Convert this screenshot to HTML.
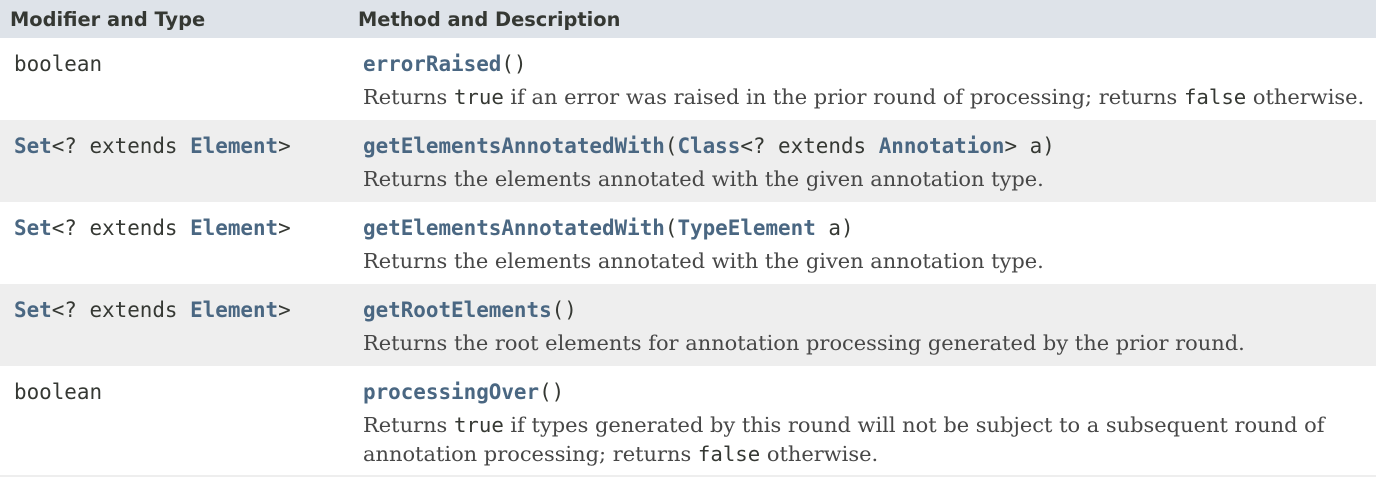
<!DOCTYPE html>
<html><head><meta charset="utf-8"><style>
body{margin:0;width:1376px;height:479px;background:#fff;position:relative;overflow:hidden}
.row{position:absolute;left:0;width:1376px}
.hd{top:0;height:38px;background:#dee3e9}
.h{position:absolute;top:8px;font:bold 19.4px "DejaVu Sans",sans-serif;color:#353833}
.c{position:absolute;font:20.9px "DejaVu Sans Mono",monospace;color:#353833;white-space:pre;line-height:24px}
.c b{color:#4a6782;font-weight:bold}
.d{position:absolute;left:363px;font:20.95px "DejaVu Serif",serif;color:#474747;line-height:29px;white-space:nowrap}
.d code{font:20.7px "DejaVu Sans Mono",monospace;color:#353833}
.g{background:#eeeeee}
</style></head><body>
<div class="row hd"><span class="h" style="left:10px">Modifier and Type</span><span class="h" style="left:358px">Method and Description</span></div>
<div class="row" style="top:38px;height:82px"></div>
<div class="row g" style="top:120px;height:82px"></div>
<div class="row" style="top:202px;height:82px"></div>
<div class="row g" style="top:284px;height:82px"></div>
<div class="row" style="top:475px;height:2px;background:#eeeeee"></div>

<div class="c" style="left:14px;top:52px">boolean</div>
<div class="c" style="left:363px;top:52px"><b>errorRaised</b>()</div>
<div class="d" style="top:83px">Returns <code>true</code> if an error was raised in the prior round of processing; returns <code>false</code> otherwise.</div>

<div class="c" style="left:14px;top:134px"><b>Set</b>&lt;? extends <b>Element</b>&gt;</div>
<div class="c" style="left:363px;top:134px"><b>getElementsAnnotatedWith</b>(<b>Class</b>&lt;? extends <b>Annotation</b>&gt; a)</div>
<div class="d" style="top:165px">Returns the elements annotated with the given annotation type.</div>

<div class="c" style="left:14px;top:216px"><b>Set</b>&lt;? extends <b>Element</b>&gt;</div>
<div class="c" style="left:363px;top:216px"><b>getElementsAnnotatedWith</b>(<b>TypeElement</b> a)</div>
<div class="d" style="top:247px">Returns the elements annotated with the given annotation type.</div>

<div class="c" style="left:14px;top:298px"><b>Set</b>&lt;? extends <b>Element</b>&gt;</div>
<div class="c" style="left:363px;top:298px"><b>getRootElements</b>()</div>
<div class="d" style="top:329px">Returns the root elements for annotation processing generated by the prior round.</div>

<div class="c" style="left:14px;top:380px">boolean</div>
<div class="c" style="left:363px;top:380px"><b>processingOver</b>()</div>
<div class="d" style="top:411px">Returns <code>true</code> if types generated by this round will not be subject to a subsequent round of<br>annotation processing; returns <code>false</code> otherwise.</div>
</body></html>
